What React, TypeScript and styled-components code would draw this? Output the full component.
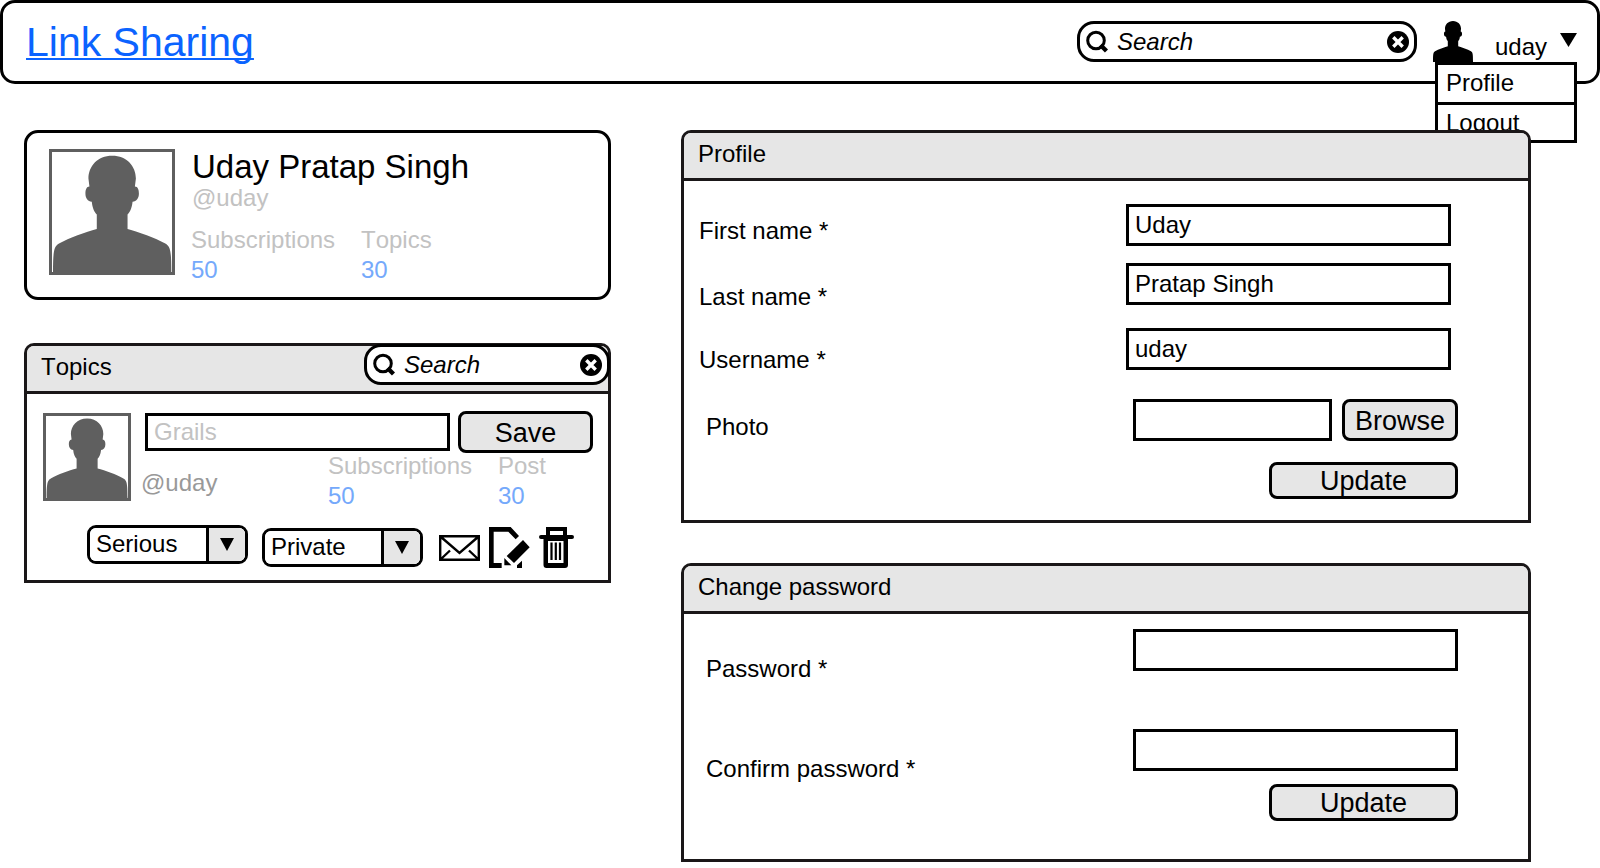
import React from "react";
import styled, { createGlobalStyle } from "styled-components";

const ink = "#000";
const panelInk = "#1a1718";
const fill = "#e6e6e6";
const muted = "#c2c2c2";
const figure = "#5f5f5f";

const GlobalStyle = createGlobalStyle`
  *, *::before, *::after { box-sizing: border-box; }
  body {
    margin: 0;
    background: #fff;
    color: ${ink};
    font-family: "Liberation Sans", Arial, sans-serif;
    font-size: 24px;
    line-height: 28px;
    font-kerning: none;
  }
  input, button, select { font: inherit; font-kerning: none; color: inherit; margin: 0; }
  h1, h2, p, dl, dd, ul { margin: 0; padding: 0; font-weight: 400; }
`;

const Header = styled.header`
  position: relative;
  display: flex;
  align-items: flex-start;
  height: 84px;
  padding: 18px 20px 0 23px;
  border: 3px solid ${ink};
  border-radius: 15px;
`;

const Brand = styled.a`
  margin-right: auto;
  font-size: 41px;
  line-height: 42px;
  color: #0b63ff;
  text-decoration: underline;
  text-decoration-thickness: 2px;
  text-underline-offset: 2px;
  text-decoration-skip-ink: none;
`;

const SearchBox = styled.form<{ $width: number }>`
  display: flex;
  align-items: center;
  width: ${(p) => p.$width}px;
  height: 41px;
  padding: 0 5px 0 6px;
  border: 3px solid ${ink};
  border-radius: 17px;
  background: #fff;
`;

const SearchInput = styled.input`
  flex: 1;
  min-width: 0;
  height: 28px;
  padding: 0 0 0 9px;
  border: 0;
  outline: 0;
  background: transparent;
  font-style: italic;
  &::placeholder { color: ${ink}; opacity: 1; }
`;

const ClearButton = styled.button`
  display: flex;
  padding: 0;
  border: 0;
  background: none;
`;

const Account = styled.div`
  position: relative;
  display: flex;
  margin-left: 16px;
`;

const AccountToggle = styled.button`
  display: flex;
  align-items: flex-start;
  padding: 0;
  border: 0;
  background: none;
  text-align: left;
`;

const AccountName = styled.span`
  width: 87px;
  padding: 12px 0 0 22px;
`;

const AccountArrow = styled.span`
  display: flex;
  padding-top: 12px;
`;

const Menu = styled.ul`
  position: absolute;
  top: 41px;
  left: 2px;
  right: 0;
  border: 3px solid ${ink};
  background: #fff;
  list-style: none;
`;

const MenuItem = styled.li`
  padding: 4px 8px;
  height: 37px;
  & + & { height: 38px; border-top: 3px solid ${ink}; }
  a { color: inherit; text-decoration: none; }
`;

const Main = styled.main`
  position: relative;
  display: grid;
  grid-template-columns: minmax(0, 587fr) minmax(0, 850fr);
  align-items: start;
  gap: 70px;
  padding: 46px 69px 6px 24px;
`;

const Column = styled.div<{ $gap: number }>`
  display: flex;
  flex-direction: column;
  gap: ${(p) => p.$gap}px;
`;

const UserCard = styled.section`
  display: flex;
  gap: 17px;
  height: 170px;
  padding: 16px 22px;
  border: 3px solid ${ink};
  border-radius: 14px;
`;

const AvatarFrame = styled.span<{ $size: number }>`
  flex: none;
  width: ${(p) => p.$size}px;
  height: ${(p) => p.$size}px;
  border: 3px solid ${figure};
  background: #fff;
  color: ${figure};
  svg { display: block; width: 100%; height: 100%; }
`;

const UserName = styled.h1`
  font-size: 33px;
  line-height: 35px;
`;

const Handle = styled.p<{ $tone: string }>`
  color: ${(p) => p.$tone};
`;

const Stats = styled.dl`
  display: grid;
  grid-template-columns: 170px auto;
`;

const Stat = styled.div`
  dt { color: ${muted}; line-height: 30px; }
  dd { line-height: 30px; }
  a { color: #75a9fb; text-decoration: none; }
`;

const UserInfo = styled.div`
  display: flex;
  flex-direction: column;
  ${Handle} { margin-bottom: 13px; }
  ${Stats} { margin-left: -1px; }
`;

const Panel = styled.section<{ $height: number }>`
  min-height: ${(p) => p.$height}px;
  border: 3px solid ${panelInk};
  border-radius: 10px 10px 0 0;
  background: #fff;
`;

const PanelHead = styled.div`
  display: flex;
  justify-content: space-between;
  height: 48px;
  border-bottom: 3px solid ${panelInk};
  border-radius: 7px 7px 0 0;
  background: ${fill};
  ${SearchBox} { margin: -2px -2px 0 0; }
`;

const PanelTitle = styled.h2`
  padding: 7px 14px;
  font-size: 24px;
  line-height: 28px;
`;

const TopicEditor = styled.form`
  display: flex;
  flex-direction: column;
  padding: 17px 15px 12px 16px;
`;

const TopicTop = styled.div`
  display: flex;
  gap: 14px;
`;

const TopicAvatar = styled.div`
  display: flex;
  align-items: flex-end;
  height: 90px;
`;

const TopicBody = styled.div`
  flex: 1;
  min-width: 0;
`;

const TopicNameRow = styled.div`
  display: flex;
  align-items: center;
  gap: 8px;
`;

const TextInput = styled.input<{ $height?: number; $width?: string }>`
  width: ${(p) => p.$width ?? "325px"};
  height: ${(p) => p.$height ?? 42}px;
  min-width: 0;
  padding: 0 6px;
  border: 3px solid ${ink};
  border-radius: 0;
  background: #fff;
  outline: 0;
  &::placeholder { color: ${muted}; opacity: 1; }
`;

const Button = styled.button<{ $width: number; $height: number }>`
  flex: none;
  width: ${(p) => p.$width}px;
  height: ${(p) => p.$height}px;
  padding: 1px 0 0;
  border: 3px solid ${ink};
  border-radius: 8px;
  background: ${fill};
  font-size: 27px;
  line-height: 30px;
`;

const TopicMeta = styled.div`
  display: flex;
  justify-content: space-between;
  margin-top: -2px;
  padding: 0 47px 0 0;
  ${Handle} { padding-top: 18px; margin-left: -4px; }
`;

const Toolbar = styled.div`
  display: flex;
  align-items: flex-start;
  gap: 14px;
  padding: 14px 0 0 44px;
`;

const ToolGroup = styled.div`
  display: flex;
  align-items: center;
  gap: 16px;
  padding-top: 2px;
`;

const Picker = styled.span`
  display: grid;
  width: 161px;
  height: 39px;
  border: 3px solid ${ink};
  border-radius: 9px;
  overflow: hidden;
  select {
    grid-area: 1 / 1;
    width: 100%;
    padding: 0 6px 1px;
    border: 0;
    outline: 0;
    appearance: none;
    background: #fff;
  }
`;

const PickerArrow = styled.span`
  grid-area: 1 / 1;
  justify-self: end;
  display: flex;
  align-items: center;
  justify-content: center;
  width: 39px;
  border-left: 3px solid ${ink};
  background: ${fill};
  pointer-events: none;
`;

const IconBar = styled.div`
  display: flex;
  align-items: center;
  gap: 9px;
`;

const IconButton = styled.button`
  display: flex;
  padding: 0;
  border: 0;
  background: none;
`;

const PanelForm = styled.form<{ $top: number }>`
  padding: ${(p) => p.$top}px 70px 20px 15px;
`;

const Fields = styled.div<{ $gap: number }>`
  display: flex;
  flex-direction: column;
  gap: ${(p) => p.$gap}px;
`;

const FieldRow = styled.div<{ $indent?: boolean; $above?: number }>`
  display: flex;
  align-items: flex-start;
  justify-content: space-between;
  margin-top: ${(p) => p.$above ?? 0}px;
  padding: ${(p) => (p.$indent ? "0 0 0 7px" : "0 7px 0 0")};
`;

const FieldLabel = styled.label<{ $drop: number }>`
  padding-top: ${(p) => p.$drop}px;
`;

const FileGroup = styled.div`
  display: flex;
  gap: 10px;
`;

const Actions = styled.div<{ $top: number }>`
  display: flex;
  justify-content: flex-end;
  padding-top: ${(p) => p.$top}px;
`;

const bust =
  "M189 20C145 20 118 52 118 88L121 112C112 112 109 122 109 133C109 147 116 157 128 158C130 177 135 188 143 196V239C110 248 60 265 30 283C14 293 12 305 12 377H366C366 305 364 293 348 283C318 265 268 248 235 239V196C243 188 248 177 250 158C262 157 269 147 269 133C269 122 266 112 257 112L260 88C260 52 233 20 189 20Z";

function Avatar({ size }: { size: number }) {
  return (
    <AvatarFrame $size={size}>
      <svg viewBox="9 9 359 359" aria-hidden="true">
        <path d={bust} fill="currentColor" />
      </svg>
    </AvatarFrame>
  );
}

function Triangle({ width, height }: { width: number; height: number }) {
  return (
    <svg width={width} height={height} viewBox="0 0 16 14" preserveAspectRatio="none" aria-hidden="true">
      <path d="M0 0H16L8 14Z" />
    </svg>
  );
}

function Search({ width, label }: { width: number; label: string }) {
  return (
    <SearchBox $width={width} role="search">
      <svg width="22" height="23" viewBox="0 0 22 23" aria-hidden="true">
        <circle cx="10" cy="10.5" r="8.3" fill="none" stroke="#000" strokeWidth="3" />
        <path d="M14.5 15L20.5 21" stroke="#000" strokeWidth="4.4" />
      </svg>
      <SearchInput placeholder="Search" aria-label={label} />
      <ClearButton type="button" aria-label="Clear search">
        <svg width="22" height="22" viewBox="0 0 22 22" aria-hidden="true">
          <circle cx="11" cy="11" r="11" />
          <path d="M6.3 6.3L15.7 15.7M15.7 6.3L6.3 15.7" stroke="#fff" strokeWidth="3.4" />
        </svg>
      </ClearButton>
    </SearchBox>
  );
}

function StatItem({ name, value }: { name: string; value: string }) {
  return (
    <Stat>
      <dt>{name}</dt>
      <dd>
        <a href="#">{value}</a>
      </dd>
    </Stat>
  );
}

function Select({ label, options }: { label: string; options: string[] }) {
  return (
    <Picker>
      <select aria-label={label} defaultValue={options[0]}>
        {options.map((option) => (
          <option key={option}>{option}</option>
        ))}
      </select>
      <PickerArrow>
        <Triangle width={14} height={13} />
      </PickerArrow>
    </Picker>
  );
}

export default function App() {
  return (
    <>
      <GlobalStyle />
      <Header>
        <Brand href="#">Link Sharing</Brand>
        <Search width={340} label="Search links" />
        <Account>
          <AccountToggle type="button" aria-haspopup="menu" aria-expanded="true">
            <svg width="40" height="41" viewBox="12 20 354 357" preserveAspectRatio="none" aria-hidden="true">
              <path d={bust} />
            </svg>
            <AccountName>uday</AccountName>
            <AccountArrow>
              <Triangle width={17} height={14} />
            </AccountArrow>
          </AccountToggle>
          <Menu>
            <MenuItem>
              <a href="#">Profile</a>
            </MenuItem>
            <MenuItem>
              <a href="#">Logout</a>
            </MenuItem>
          </Menu>
        </Account>
      </Header>

      <Main>
        <Column $gap={43}>
          <UserCard>
            <Avatar size={126} />
            <UserInfo>
              <UserName>Uday Pratap Singh</UserName>
              <Handle $tone={muted}>@uday</Handle>
              <Stats>
                <StatItem name="Subscriptions" value="50" />
                <StatItem name="Topics" value="30" />
              </Stats>
            </UserInfo>
          </UserCard>

          <Panel $height={240}>
            <PanelHead>
              <PanelTitle>Topics</PanelTitle>
              <Search width={246} label="Search topics" />
            </PanelHead>
            <TopicEditor>
              <TopicTop>
                <TopicAvatar>
                  <Avatar size={88} />
                </TopicAvatar>
                <TopicBody>
                  <TopicNameRow>
                    <TextInput $height={38} $width="100%" placeholder="Grails" aria-label="Topic name" />
                    <Button type="submit" $width={135} $height={42}>
                      Save
                    </Button>
                  </TopicNameRow>
                  <TopicMeta>
                    <Handle $tone="#999">@uday</Handle>
                    <Stats>
                      <StatItem name="Subscriptions" value="50" />
                      <StatItem name="Post" value="30" />
                    </Stats>
                  </TopicMeta>
                </TopicBody>
              </TopicTop>
              <Toolbar>
                <Select label="Seriousness" options={["Serious", "Very Serious", "Casual"]} />
                <ToolGroup>
                  <Select label="Visibility" options={["Private", "Public"]} />
                  <IconBar>
                    <IconButton type="button" aria-label="Send invitation">
                      <svg width="41" height="26" viewBox="0 0 41 26" fill="none" stroke="#000" strokeWidth="2.4" aria-hidden="true">
                        <path d="M1.2 1.2H39.8V24.8H1.2ZM2 2L20.5 18L39 2M2 24L11 15.5M39 24L30 15.5" />
                      </svg>
                    </IconButton>
                    <IconButton type="button" aria-label="Edit topic">
                      <svg width="41" height="41" viewBox="210 50 123 123" aria-hidden="true">
                        <path d="M210 50H275L300 77L290 87L268 64H224V158H248V173H210Z" />
                        <path d="M312 89L332 111L285 158L263 137Z" />
                        <path d="M256 143L277 165H256ZM309 151V173H294V165Z" />
                      </svg>
                    </IconButton>
                    <IconButton type="button" aria-label="Delete topic">
                      <svg width="35" height="41" viewBox="0 0 35 41" aria-hidden="true">
                        <path d="M9 8V2H26V8" fill="none" stroke="#000" strokeWidth="4" />
                        <path d="M2 8H33A2 2 0 0 1 33 12H29V38A3 3 0 0 1 26 41H7.5A3 3 0 0 1 4.5 38V12H2A2 2 0 0 1 2 8Z" />
                        <path d="M9 14H24.5V36H9Z" fill="#fff" />
                        <path d="M12.5 15.5V33M16.8 15.5V33M21 15.5V33" stroke="#000" strokeWidth="2.2" />
                      </svg>
                    </IconButton>
                  </IconBar>
                </ToolGroup>
              </Toolbar>
            </TopicEditor>
          </Panel>
        </Column>

        <Column $gap={40}>
          <Panel $height={393}>
            <PanelHead>
              <PanelTitle>Profile</PanelTitle>
            </PanelHead>
            <PanelForm $top={23}>
              <Fields $gap={17}>
                <FieldRow>
                  <FieldLabel htmlFor="first" $drop={13}>First name *</FieldLabel>
                  <TextInput id="first" defaultValue="Uday" />
                </FieldRow>
                <FieldRow>
                  <FieldLabel htmlFor="last" $drop={20}>Last name *</FieldLabel>
                  <TextInput id="last" defaultValue="Pratap Singh" />
                </FieldRow>
                <FieldRow>
                  <FieldLabel htmlFor="username" $drop={18}>Username *</FieldLabel>
                  <TextInput id="username" defaultValue="uday" />
                </FieldRow>
                <FieldRow $indent $above={8}>
                  <FieldLabel htmlFor="photo" $drop={14}>Photo</FieldLabel>
                  <FileGroup>
                    <TextInput id="photo" $width="199px" />
                    <Button type="button" $width={116} $height={42}>Browse</Button>
                  </FileGroup>
                </FieldRow>
              </Fields>
              <Actions $top={21}>
                <Button type="submit" $width={189} $height={37}>Update</Button>
              </Actions>
            </PanelForm>
          </Panel>

          <Panel $height={299}>
            <PanelHead>
              <PanelTitle>Change password</PanelTitle>
            </PanelHead>
            <PanelForm $top={15}>
              <Fields $gap={46}>
                <FieldRow $indent>
                  <FieldLabel htmlFor="password" $drop={26}>Password *</FieldLabel>
                  <TextInput id="password" type="password" />
                </FieldRow>
                <FieldRow $indent>
                  <FieldLabel htmlFor="confirm" $drop={26}>Confirm password *</FieldLabel>
                  <TextInput id="confirm" type="password" />
                </FieldRow>
              </Fields>
              <Actions $top={1}>
                <Button type="submit" $width={189} $height={37}>Update</Button>
              </Actions>
            </PanelForm>
          </Panel>
        </Column>
      </Main>
    </>
  );
}
